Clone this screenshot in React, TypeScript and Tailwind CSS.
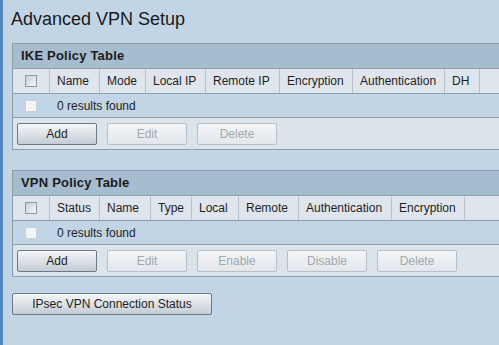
import React from "react";

type Col = { label: string; w: string };

const ikeCols: Col[] = [
  { label: "Name", w: "w-[50px]" },
  { label: "Mode", w: "w-[46px]" },
  { label: "Local IP", w: "w-[60px]" },
  { label: "Remote IP", w: "w-[74px]" },
  { label: "Encryption", w: "w-[73px]" },
  { label: "Authentication", w: "w-[92px]" },
  { label: "DH", w: "w-[35px]" },
];

const vpnCols: Col[] = [
  { label: "Status", w: "w-[50px]" },
  { label: "Name", w: "w-[51px]" },
  { label: "Type", w: "w-[41px]" },
  { label: "Local", w: "w-[47px]" },
  { label: "Remote", w: "w-[60px]" },
  { label: "Authentication", w: "w-[93px]" },
  { label: "Encryption", w: "w-[73px]" },
];

const Checkbox = ({ disabled }: { disabled?: boolean }) =>
  disabled ? (
    <span className="block w-[12px] h-[12px] border border-[#c9d1d8] bg-[#f3f5f7]" />
  ) : (
    <span className="block w-[12px] h-[12px] border border-[#8e99a3] bg-gradient-to-br from-[#c9ced3] to-[#f7f8f9]" />
  );

const Button = ({ label, disabled }: { label: string; disabled?: boolean }) =>
  disabled ? (
    <button className="w-[80px] h-[22px] rounded-[2px] border border-[#b7c0c8] bg-gradient-to-b from-[#f3f5f7] to-[#e2e7ec] text-[12px] text-[#a2a7ac]">
      {label}
    </button>
  ) : (
    <button className="w-[80px] h-[22px] rounded-[2px] border border-[#6e7a85] bg-gradient-to-b from-[#f5f7f9] to-[#c3ccd5] text-[12px] text-[#1e1e1e]">
      {label}
    </button>
  );

const PolicyTable = ({
  title,
  cols,
  buttons,
}: {
  title: string;
  cols: Col[];
  buttons: { label: string; disabled?: boolean }[];
}) => (
  <div className="w-[500px] border-l border-y border-[#8b9cab]">
    {/* header band */}
    <div className="h-[24px] bg-[#a6bccf] pl-[8px] flex items-center">
      <span className="text-[13px] font-bold tracking-[0.2px] text-[#1b1b1b]">{title}</span>
    </div>

    {/* column headers */}
    <div className="h-[25px] flex border-t border-[#8e9fae] bg-[#dee5ec]">
      <div className="w-[37px] border-r border-[#b6c1cb] flex items-center pl-[12px]">
        <Checkbox />
      </div>
      {cols.map((c) => (
        <div
          key={c.label}
          className={`${c.w} shrink-0 border-r border-[#b6c1cb] flex items-center pl-[7px] text-[12px] text-[#1e1e1e] whitespace-nowrap`}
        >
          {c.label}
        </div>
      ))}
      <div className="flex-1" />
    </div>

    {/* empty row */}
    <div className="h-[24px] flex items-center border-t border-[#8e9fae] bg-[#c2d5e6]">
      <div className="w-[37px] pl-[12px]">
        <Checkbox disabled />
      </div>
      <span className="pl-[7px] text-[12px] text-[#1e1e1e]">0 results found</span>
    </div>

    {/* buttons */}
    <div className="h-[32px] flex items-center gap-[10px] pl-[4px] border-t border-[#8e9fae] bg-[#dce4eb]">
      {buttons.map((b) => (
        <Button key={b.label} label={b.label} disabled={b.disabled} />
      ))}
    </div>
  </div>
);

export default function App() {
  return (
    <div
      className="w-[499px] h-[345px] overflow-hidden flex bg-[#c2d5e6]"
      style={{ fontFamily: '"Liberation Sans", Arial, sans-serif' }}
    >
      <div className="w-[3px] shrink-0 bg-[#5288c2]" />
      <div className="flex-1 pl-[9px]">
        <h1 className="pt-[8px] -ml-[1px] text-[18px] leading-[22px] text-[#1a1a1a]">
          Advanced VPN Setup
        </h1>
        <div className="mt-[13px]">
          <PolicyTable
            title="IKE Policy Table"
            cols={ikeCols}
            buttons={[
              { label: "Add" },
              { label: "Edit", disabled: true },
              { label: "Delete", disabled: true },
            ]}
          />
        </div>
        <div className="mt-[20px]">
          <PolicyTable
            title="VPN Policy Table"
            cols={vpnCols}
            buttons={[
              { label: "Add" },
              { label: "Edit", disabled: true },
              { label: "Enable", disabled: true },
              { label: "Disable", disabled: true },
              { label: "Delete", disabled: true },
            ]}
          />
        </div>
        <button className="mt-[16px] w-[200px] h-[22px] rounded-[2px] border border-[#6e7a85] bg-gradient-to-b from-[#f5f7f9] to-[#c3ccd5] text-[12px] text-[#1e1e1e]">
          IPsec VPN Connection Status
        </button>
      </div>
    </div>
  );
}
